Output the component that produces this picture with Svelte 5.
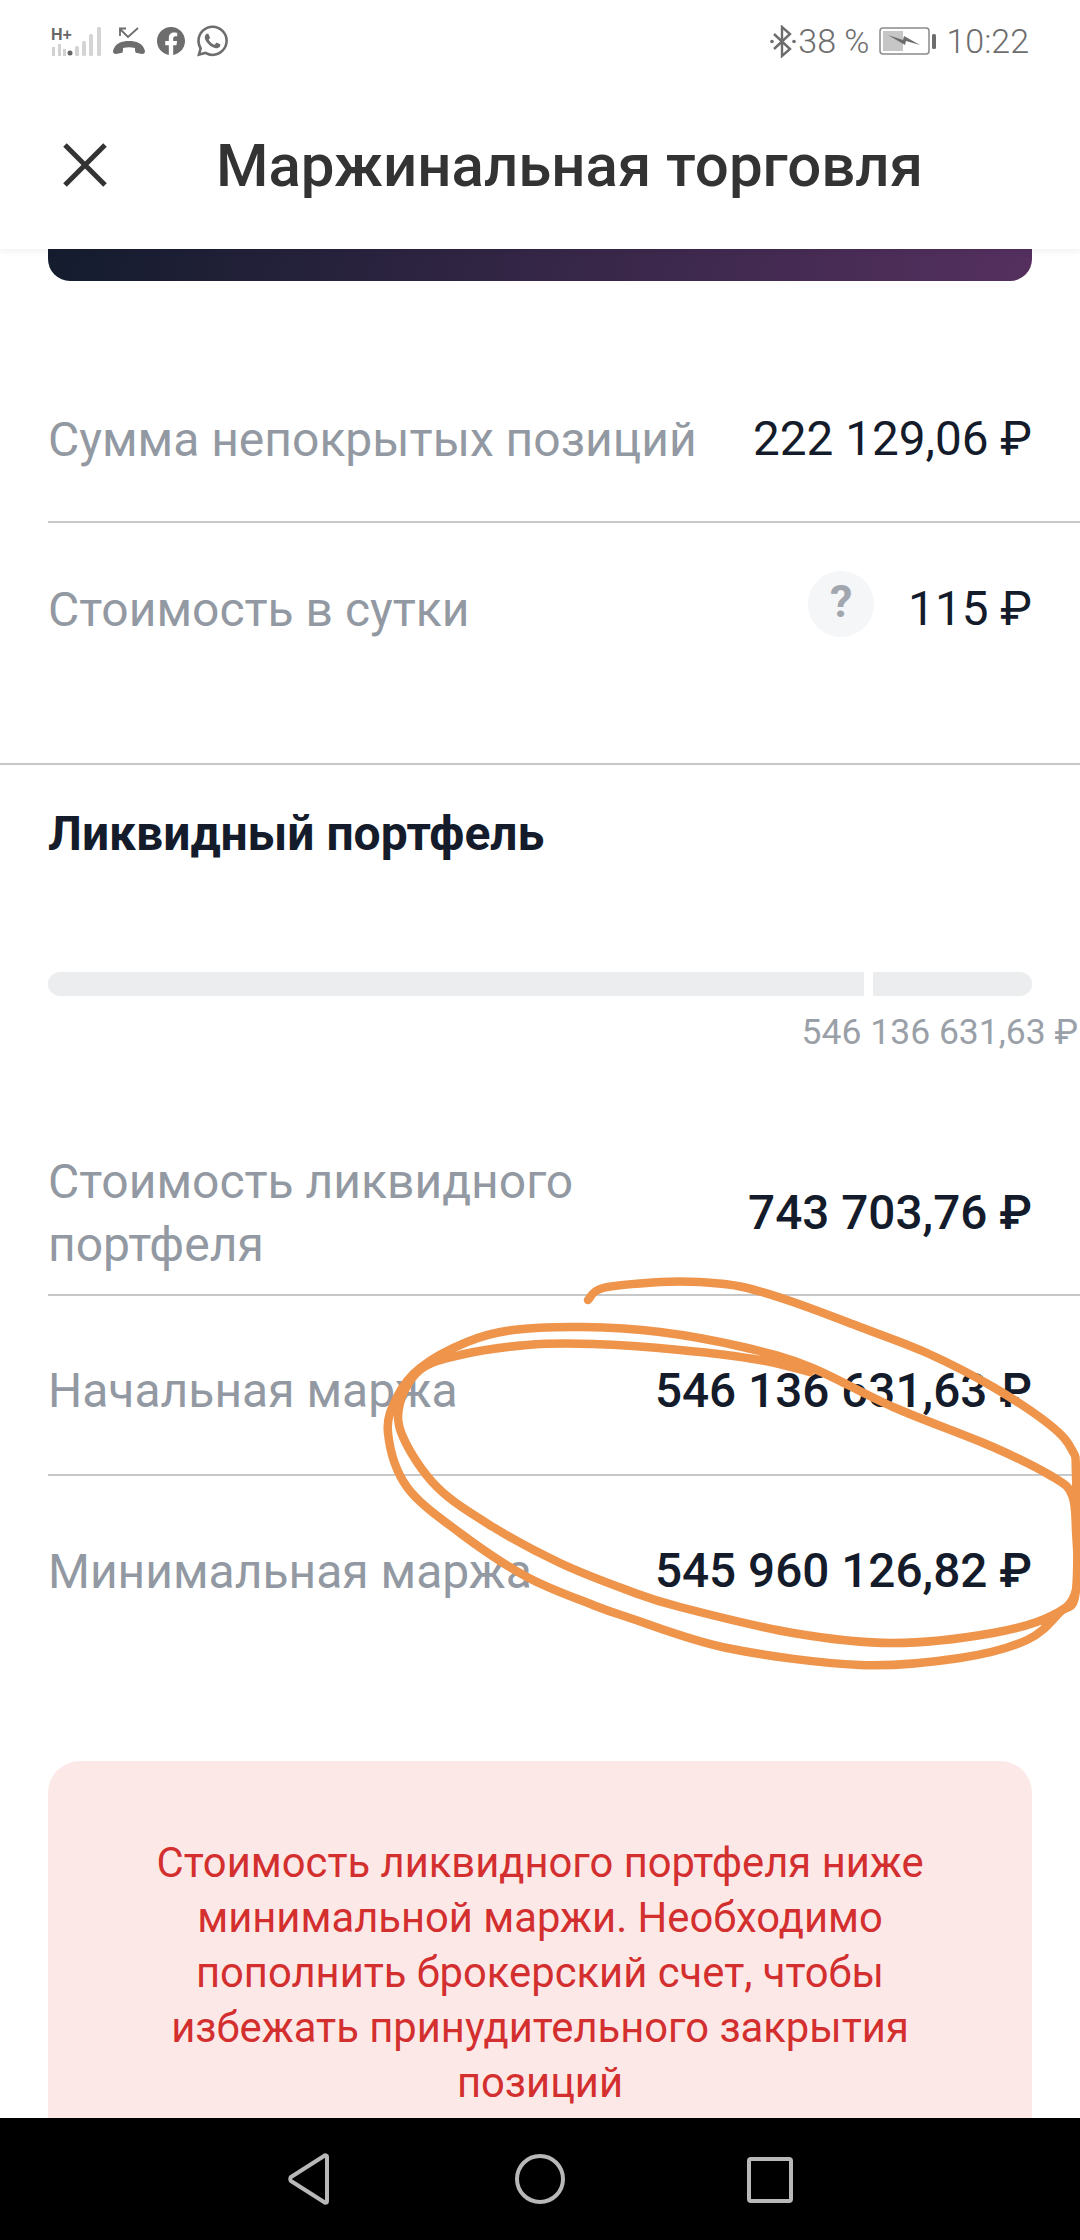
<script>
  // hand-drawn marker stroke over the screenshot, traced as points
  const scribble = [
    [588, 1300], [603, 1288], [660, 1282], [700, 1282], [743, 1287], [793, 1302], [860, 1327], [927, 1353],
    [993, 1387], [1050, 1425], [1072, 1450], [1076, 1475], [1076, 1590], [1060, 1612], [1027, 1640], [960, 1658], [860, 1665],
    [727, 1648], [627, 1617], [593, 1605], [527, 1577], [460, 1533], [407, 1487], [388, 1433], [397, 1397],
    [420, 1368], [467, 1342], [513, 1330], [583, 1327], [660, 1332], [743, 1347], [810, 1367], [893, 1407],
    [993, 1447], [1053, 1477], [1072, 1495], [1076, 1530], [1076, 1590], [1053, 1615], [993, 1633], [893, 1643],
    [793, 1633], [680, 1607], [627, 1590], [560, 1563], [493, 1527], [437, 1487], [403, 1437], [400, 1403],
    [420, 1370], [460, 1355], [527, 1345], [593, 1344], [680, 1350], [760, 1360], [810, 1372]
  ]

  function smooth(p) {
    let d = `M${p[0][0]} ${p[0][1]}`
    for (let i = 0; i < p.length - 1; i++) {
      const a = p[i - 1] || p[i]
      const b = p[i]
      const c = p[i + 1]
      const e = p[i + 2] || c
      d += ` C${b[0] + (c[0] - a[0]) / 6} ${b[1] + (c[1] - a[1]) / 6} ${c[0] - (e[0] - b[0]) / 6} ${c[1] - (e[1] - b[1]) / 6} ${c[0]} ${c[1]}`
    }
    return d
  }

  const signal = [
    [27, 10],
    [34, 15],
    [41, 22],
    [49, 29]
  ]
</script>

<div class="page">
  <header class="top">
    <div class="status">
      <div class="left">
        <svg class="net" width="50" height="32" viewBox="0 0 50 32">
          <text x="0" y="15" class="hplus">H+</text>
          <rect x="1" y="22" width="3" height="9" fill="#d2d2d2" />
          <rect x="7" y="19" width="3" height="12" fill="#d2d2d2" />
          <rect x="12" y="24" width="3" height="7" fill="#d2d2d2" />
          <circle cx="19" cy="28" r="2.5" fill="#666" />
          {#each signal as s}
            <rect x={s[0] - 3} y={31 - s[1]} width="4" height={s[1]} rx="1.5" fill="#d4d4d4" />
          {/each}
        </svg>
        <svg class="missed" width="32" height="28" viewBox="0 0 32 28">
          <path d="M7 1v8M6 1.500h7M7 2l8 8 10-9" fill="none" stroke="#6d6d6d" stroke-width="1.800" />
          <path d="M0 24c2-8 9-10 16-10s14 2 16 10c0 2-1 3-3 3l-5-1c-2 0-2-2-2-5-4-1-8-1-12 0 0 3 0 5-2 5l-5 1c-2 0-3-1-3-3z" fill="#6d6d6d" />
        </svg>
        <svg width="28" height="28" viewBox="0 0 24 24">
          <path fill="#6d6d6d" d="M24 12.073c0-6.627-5.373-12-12-12s-12 5.373-12 12c0 5.990 4.388 10.954 10.125 11.854v-8.385H7.078v-3.470h3.047V9.430c0-3.007 1.792-4.669 4.533-4.669 1.312 0 2.686.235 2.686.235v2.953H15.830c-1.491 0-1.956.925-1.956 1.874v2.250h3.328l-.532 3.470h-2.796v8.385C19.612 23.027 24 18.062 24 12.073z" />
        </svg>
        <svg width="31" height="32" viewBox="0 0 24 24">
          <path fill="#6d6d6d" d="M17.472 14.382c-.297-.149-1.758-.867-2.030-.967-.273-.099-.471-.148-.670.150-.197.297-.767.966-.940 1.164-.173.199-.347.223-.644.075-.297-.150-1.255-.463-2.390-1.475-.883-.788-1.480-1.761-1.653-2.059-.173-.297-.018-.458.130-.606.134-.133.298-.347.446-.520.149-.174.198-.298.298-.497.099-.198.050-.371-.025-.520-.075-.149-.669-1.612-.916-2.207-.242-.579-.487-.500-.669-.510-.173-.008-.371-.010-.570-.010-.198 0-.520.074-.792.372-.272.297-1.040 1.016-1.040 2.479 0 1.462 1.065 2.875 1.213 3.074.149.198 2.096 3.200 5.077 4.487.709.306 1.262.489 1.694.625.712.227 1.360.195 1.871.118.571-.085 1.758-.719 2.006-1.413.248-.694.248-1.289.173-1.413-.074-.124-.272-.198-.570-.347m-5.421 7.403h-.004a9.870 9.870 0 01-5.031-1.378l-.361-.214-3.741.982.998-3.648-.235-.374a9.860 9.860 0 01-1.510-5.260c.001-5.450 4.436-9.884 9.888-9.884 2.640 0 5.122 1.030 6.988 2.898a9.825 9.825 0 012.893 6.994c-.003 5.450-4.437 9.884-9.885 9.884m8.413-18.297A11.815 11.815 0 0012.050 0C5.495 0 .160 5.335.157 11.892c0 2.096.547 4.142 1.588 5.945L.057 24l6.305-1.654a11.882 11.882 0 005.683 1.448h.005c6.554 0 11.890-5.335 11.893-11.893a11.821 11.821 0 00-3.480-8.413z" />
        </svg>
      </div>
      <div class="right">
        <svg width="26" height="33" viewBox="0 0 26 33">
          <path d="M4 9l16 15-8 7V2l8 7L4 24" fill="none" stroke="#6d6d6d" stroke-width="2.400" />
          <circle cx="2" cy="16.500" r="1.800" fill="#6d6d6d" />
          <circle cx="24" cy="16.500" r="1.800" fill="#6d6d6d" />
        </svg>
        <span class="pct">38 %</span>
        <svg class="batt" width="58" height="28" viewBox="0 0 58 28">
          <rect x="1" y="1" width="49" height="26" rx="3" fill="none" stroke="#8a8a8a" stroke-width="1.500" />
          <rect x="4" y="4" width="20" height="20" fill="#c6c6c6" />
          <path d="M9 8l15 5 1-4 16 9-14-4-1 4z" fill="#6d6d6d" />
          <rect x="53" y="7" width="4" height="15" rx="1.500" fill="#6d6d6d" />
        </svg>
        <span class="time">10:22</span>
      </div>
    </div>
    <div class="nav">
      <svg class="close" width="46" height="46" viewBox="0 0 46 46">
        <path d="M3 3l40 40M43 3L3 43" stroke="#333" stroke-width="5" fill="none" />
      </svg>
      <h1>Маржинальная торговля</h1>
    </div>
  </header>

  <div class="banner"></div>

  <section class="rows first">
    <div class="row r1">
      <span class="label">Сумма непокрытых позиций</span>
      <span class="value">222 129,06 ₽</span>
    </div>
    <div class="row r2">
      <span class="label">Стоимость в сутки</span>
      <span class="help">?</span>
      <span class="value">115 ₽</span>
    </div>
  </section>

  <section class="liquid">
    <h2>Ликвидный портфель</h2>
    <div class="bar">
      <div class="seg a"></div>
      <div class="seg b"></div>
    </div>
    <div class="caption">546 136 631,63 ₽</div>
  </section>

  <section class="rows">
    <div class="row r3">
      <span class="label wide">Стоимость ликвидного портфеля</span>
      <span class="value strong">743 703,76 ₽</span>
    </div>
    <div class="row r4">
      <span class="label">Начальная маржа</span>
      <span class="value strong">546 136 631,63 ₽</span>
    </div>
    <div class="row r5">
      <span class="label">Минимальная маржа</span>
      <span class="value strong">545 960 126,82 ₽</span>
    </div>
  </section>

  <div class="alert">
    Стоимость ликвидного портфеля ниже минимальной маржи. Необходимо пополнить брокерский счет, чтобы избежать принудительного закрытия позиций
  </div>

  <svg class="ink" width="1080" height="2240" viewBox="0 0 1080 2240">
    <path d={smooth(scribble)} fill="none" stroke="#ee944b" stroke-width="8.500" stroke-linecap="round" stroke-linejoin="round" />
  </svg>

  <div class="softkeys">
    <svg width="1080" height="122" viewBox="0 0 1080 122">
      <path d="M327 39v44c0 2-2 2-3 1l-33-21c-1-1-1-3 0-4l33-21c1-1 3-1 3 1z" fill="none" stroke="#b8b8b8" stroke-width="4" stroke-linejoin="round" />
      <circle cx="540" cy="61" r="23" fill="none" stroke="#b8b8b8" stroke-width="4" />
      <rect x="749" y="41" width="42" height="42" rx="2" fill="none" stroke="#b8b8b8" stroke-width="4" />
    </svg>
  </div>
</div>

<style>
  :global(body) {
    margin: 0;
    background: #fff;
  }

  .page {
    position: relative;
    width: 1080px;
    height: 2240px;
    overflow: hidden;
    background: #fff;
    font-family: Roboto, "Noto Sans", sans-serif;
    color: #141b2b;
  }

  .top {
    position: relative;
    z-index: 2;
    height: 249px;
    background: #fff;
    box-shadow: 0 1px 8px rgba(0, 0, 0, 0.08);
  }

  .status {
    display: flex;
    justify-content: space-between;
    align-items: center;
    height: 32px;
    padding: 25px 51px 0 51px;
    color: #6d6d6d;
    font-size: 34px;
    font-weight: 300;
  }

  .left,
  .right {
    display: flex;
    align-items: center;
  }

  .left svg {
    margin-right: 12px;
  }

  .hplus {
    font-family: "Liberation Sans", sans-serif;
    font-size: 16px;
    font-weight: 700;
    fill: #666;
  }

  .net {
    margin-right: 10px;
  }

  .pct {
    margin-left: 2px;
  }

  .batt {
    margin: 0 9px 0 10px;
  }

  .nav {
    display: flex;
    align-items: center;
    height: 120px;
    padding: 48px 0 0 62px;
  }

  h1 {
    margin: 0 0 0 108px;
    font-size: 60px;
    font-weight: 500;
    color: #333;
  }

  .banner {
    height: 32px;
    margin: 0 48px;
    border-radius: 0 0 22px 22px;
    background: linear-gradient(90deg, #141c2e, #55305f);
  }

  .rows {
    padding-left: 48px;
  }

  .rows.first {
    margin-top: 78px;
    border-bottom: 2px solid #c8c8c8;
  }

  .row {
    display: flex;
    align-items: center;
    justify-content: space-between;
    padding-right: 48px;
    box-sizing: border-box;
  }

  .r1 {
    height: 164px;
    padding-bottom: 2px;
    border-bottom: 2px solid #c8c8c8;
  }

  .r2 {
    height: 240px;
    padding-bottom: 68px;
  }

  .label {
    font-size: 48px;
    line-height: 63px;
    color: #9299a2;
  }

  .label.wide {
    width: 600px;
  }

  .value {
    font-size: 47.700px;
    white-space: nowrap;
  }

  .value.strong {
    font-weight: 500;
  }

  .help {
    width: 66px;
    height: 66px;
    margin: -10px 34px 0 auto;
    border-radius: 50%;
    background: #f5f6f8;
    color: #a2a7af;
    font-size: 45px;
    font-weight: 700;
    line-height: 62px;
    text-align: center;
  }

  .liquid {
    padding: 0 48px;
  }

  h2 {
    margin: 39px 0 0;
    font-size: 48px;
    line-height: 60px;
    font-weight: 700;
  }

  .bar {
    display: flex;
    gap: 9px;
    height: 24px;
    margin-top: 108px;
  }

  .seg {
    background: #ebedee;
  }

  .seg.a {
    width: 816px;
    border-radius: 12px 0 0 12px;
  }

  .seg.b {
    flex: 1;
    border-radius: 0 12px 12px 0;
  }

  .caption {
    margin: 16px -46px 0 0;
    font-size: 35.500px;
    line-height: 40px;
    color: #9aa0a8;
    text-align: right;
    white-space: nowrap;
  }

  .r3 {
    height: 162px;
    margin-top: 82px;
    padding-bottom: 3px;
    border-bottom: 2px solid #c8c8c8;
  }

  .r4 {
    height: 180px;
    padding-top: 11px;
    border-bottom: 2px solid #c8c8c8;
  }

  .r5 {
    height: 180px;
    padding-top: 10px;
  }

  .alert {
    height: 400px;
    margin: 105px 48px 0;
    padding: 74px 60px 0;
    border-radius: 32px;
    background: #fde8e8;
    color: #d32f2f;
    font-size: 41.750px;
    line-height: 55px;
    text-align: center;
  }

  .ink {
    position: absolute;
    top: 0;
    left: 0;
    z-index: 3;
    pointer-events: none;
  }

  .softkeys {
    position: absolute;
    left: 0;
    right: 0;
    bottom: 0;
    z-index: 4;
    height: 122px;
    background: #000;
  }

  .softkeys svg {
    display: block;
  }
</style>
